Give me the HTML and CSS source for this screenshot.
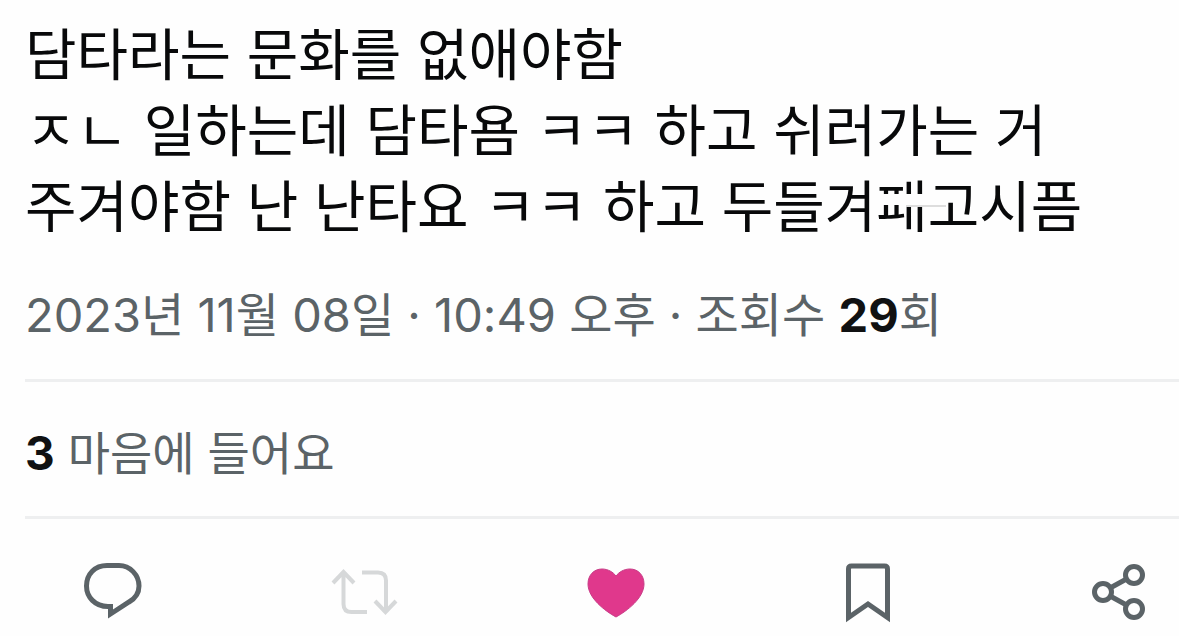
FILE: index.html
```html
<!DOCTYPE html>
<html lang="ko">
<head>
<meta charset="utf-8">
<meta name="viewport" content="width=device-width, initial-scale=1">
<title>게시물</title>
<link rel="stylesheet" href="styles.css">
</head>
<body>
<article class="post">
  <p class="post-text">담타라는 문화를 없애야함<br>ㅈㄴ 일하는데 담타욤 ㅋㅋ 하고 쉬러가는 거<br>주겨야함 난 난타요 ㅋㅋ 하고 두들겨<span class="scratched">패</span>고시픔</p>
  <p class="meta"><time datetime="2023-11-08T22:49">2023년 11월 08일 · 10:49 오후</time> · 조회수 <strong>29</strong>회</p>
  <p class="likes"><strong>3</strong> 마음에 들어요</p>
  <div class="actions">
    <button class="action" type="button" aria-label="답글">
      <svg width="72" height="72" viewBox="0 0 72 72"><path d="M31 10.500H43C54 10.500 63 20 63 31C63 38 60 43 53 47L34.500 59V51.500H32C19 51.500 10.500 42 10.500 31C10.500 19 19 10.500 31 10.500Z" fill="none" stroke="currentColor" stroke-width="5"/></svg>
    </button>
    <button class="action muted" type="button" aria-label="재게시">
      <svg width="72" height="72" viewBox="0 0 72 72"><path d="M5 28L15.500 17L26 28M15.500 18V49Q15.500 57 23.500 57H39M34 17.500H50Q58 17.500 58 25.500V56M47 46L57.500 57L68 46" fill="none" stroke="currentColor" stroke-width="4"/></svg>
    </button>
    <button class="action liked" type="button" aria-label="마음에 들어요" aria-pressed="true">
      <svg width="72" height="72" viewBox="0 0 72 72"><path d="M36 62C25 56 8 43 8 29C8 20 14 14 22 14C28 14 33 17 36 21C39 17 44 14 50 14C58 14 64 20 64 29C64 43 47 56 36 62Z" fill="currentColor" stroke="#c83c87" stroke-width="1"/></svg>
    </button>
    <button class="action" type="button" aria-label="북마크">
      <svg width="72" height="72" viewBox="0 0 72 72"><path d="M17.500 62.500V14Q17.500 11 20.500 11H53.500Q56.500 11 56.500 14V62.500L37 49Z" fill="none" stroke="currentColor" stroke-width="5"/></svg>
    </button>
    <button class="action" type="button" aria-label="공유">
      <svg width="72" height="72" viewBox="0 0 72 72"><g fill="none" stroke="currentColor" stroke-width="5"><circle cx="20" cy="37" r="8.500"/><circle cx="51" cy="20" r="8.500"/><circle cx="51" cy="54" r="8.500"/><path d="M28 32.500L43.500 24M28 41.500L43.500 50"/></g></svg>
    </button>
  </div>
</article>
</body>
</html>
```
FILE: styles.css
```css
* {
  box-sizing: border-box;
}

body {
  margin: 0;
  background: #fefefe;
  color: #08090a;
  font-family: "Noto Sans CJK KR", sans-serif;
}

.post {
  padding: 13px 0 0 25px;
}

p {
  margin: 0;
}

.post-text {
  font-size: 56px;
  line-height: 76px;
}

.scratched {
  position: relative;
}

/* Pale stroke that runs across the middle of the syllable */
.scratched::before,
.scratched::after {
  content: "";
  position: absolute;
  left: 0;
  top: 32px;
  width: 48px;
  height: 11px;
  background: #fefefe;
}

.scratched::after {
  left: 30px;
  top: 43px;
  width: 40px;
  height: 2px;
  background: #dddddd;
}

.meta,
.likes {
  border-bottom: 3px solid #eeeff0;
  color: #5b6367;
  font-family: Inter, "Noto Sans CJK KR", sans-serif;
  font-size: 47px;
  line-height: 64px;
}

.meta {
  padding: 42px 0 32px;
}

.likes {
  padding: 39px 0 31px;
  font-size: 46px;
}

strong {
  color: #101112;
  font-weight: 700;
}

.actions {
  display: flex;
  justify-content: space-between;
  padding: 36px 24px 0 51px;
}

.action {
  display: flex;
  padding: 0;
  border: 0;
  background: none;
  color: #5b6367;
  cursor: pointer;
}

.muted {
  color: #d6d8d9;
}

.liked {
  color: #e0388c;
}
```
